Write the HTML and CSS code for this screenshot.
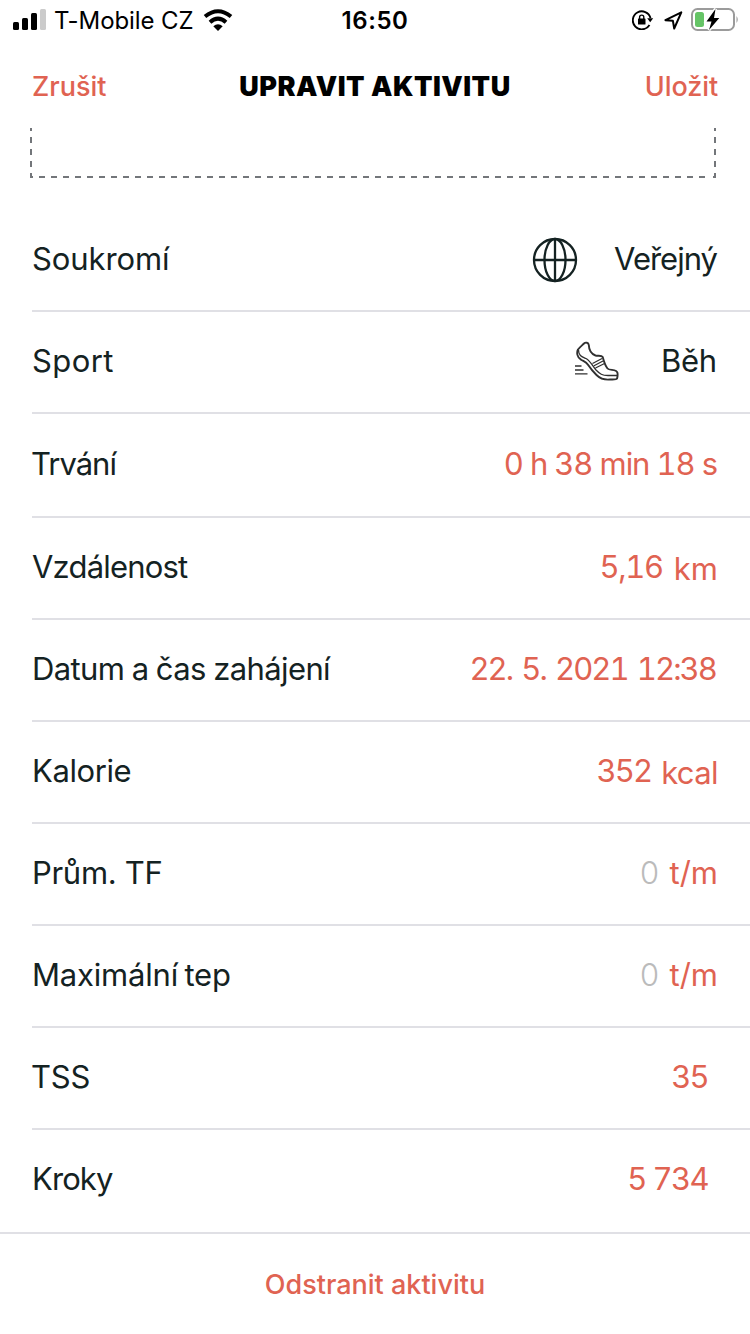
FILE: index.html
```html
<!DOCTYPE html>
<html lang="cs">
<head>
    <meta charset="UTF-8">
    <meta name="viewport" content="width=device-width, initial-scale=1.0">
    <title>Upravit aktivitu</title>
    <link rel="stylesheet" href="styles.css">
</head>
<body>
    <div class="status-bar">
        <div class="status-left">
            <svg class="signal" width="33" height="21" viewBox="0 0 33 21">
                <rect x="0" y="13" width="6" height="8" rx="1.5"/>
                <rect x="9" y="9" width="6" height="12" rx="1.5"/>
                <rect x="18" y="4" width="6" height="17" rx="1.5"/>
                <rect class="signal-off" x="27" y="0" width="6" height="21" rx="1.5"/>
            </svg>
            <span class="carrier">T-Mobile CZ</span>
            <svg class="wifi" width="30" height="22" viewBox="0 0 30 22">
                <path d="M2 7.5Q15-3 28 7.5M7 13.2Q15 6.2 23 13.2" fill="none" stroke="#000" stroke-width="4"/>
                <path d="M10.3 17.3Q15 13.3 19.7 17.3L15 22Z"/>
            </svg>
        </div>
        <div class="clock">16:50</div>
        <div class="status-right">
            <svg class="rotation" width="22" height="20" viewBox="0 0 22 20">
                <path d="M17.5 15A9 9 0 1 1 18.5 8" fill="none" stroke="#000" stroke-width="1.9"/>
                <path d="M15.2 8.2H21.2L18.2 12.2Z"/>
                <rect x="6" y="8.5" width="7.5" height="6" rx=".6"/>
                <path d="M7.6 9V7.2a2.1 2.1 0 0 1 4.2 0V9" fill="none" stroke="#000" stroke-width="1.4"/>
            </svg>
            <svg class="location" width="19" height="19" viewBox="0 0 19 19">
                <path d="M1.4 9.2L17.3 1.4L10.2 17.5L8.9 9.8Z" fill="none" stroke="#000" stroke-width="2" stroke-linejoin="round"/>
            </svg>
            <svg class="battery" width="48" height="24" viewBox="0 0 48 24">
                <rect x="1" y="1" width="42" height="21" rx="5.5" fill="none" stroke="#9b9b9b" stroke-width="2"/>
                <path d="M45.5 8Q48 11.5 45.5 15Z" fill="#9b9b9b"/>
                <rect x="4" y="4" width="9" height="15" rx="2.5" fill="#65c466"/>
                <path d="M24.5 1L15.5 13.5H20.5L18 22L28.3 10H23Z" stroke="#fff" stroke-width="3"/>
                <path d="M24.5 1L15.5 13.5H20.5L18 22L28.3 10H23Z"/>
            </svg>
        </div>
    </div>

    <div class="header">
        <a class="header-btn">Zrušit</a>
        <h1>UPRAVIT AKTIVITU</h1>
        <a class="header-btn save">Uložit</a>
    </div>

    <!-- Bottom part of the photo box, the rest is scrolled away -->
    <svg class="photo-box" width="686" height="50" viewBox="0 0 686 50">
        <path d="M1 0V3M1 9V15M1 21V27M1 33V39M1 45V50M685 0V3M685 9V15M685 21V27M685 33V39M685 45V50M0 49H3M683 49H686"/>
        <path d="M9 49H680" stroke-dasharray="6 6"/>
    </svg>

    <div class="list">
        <div class="row">
            <span class="label soukromi">Soukromí</span>
            <span class="value dark">
                <svg class="globe" width="46" height="46" viewBox="0 0 46 46">
                    <circle cx="23" cy="23" r="21"/>
                    <ellipse cx="23" cy="23" rx="10.5" ry="21"/>
                    <path d="M23 2V44M2 23H44"/>
                </svg>
                <span class="verejny">Veřejný</span>
            </span>
        </div>
        <div class="row">
            <span class="label sport">Sport</span>
            <span class="value dark">
                <svg class="shoe" width="44" height="40" viewBox="0 0 44 40">
                    <path d="M3 8.5C5 6 7 4.5 9 2.5C10.5 1 13.5 1.5 13.8 4C14 9 16.5 13 20.5 14.5C23 15.3 26.5 14 27.7 16C28.8 20 30 24.5 32.5 27.5C34.5 30 41.8 27.5 42.5 32C42.8 34.5 42.6 36 42 37.7C41.5 38.8 38 38.5 35 38.5C28 39 25 37.5 21.5 34C18.5 31 15.5 27.5 13.2 24C11 20.5 9 20.5 6 18.7C2 16.5 1.5 11.5 3 8.5Z"/>
                    <path class="thin" d="M3.5 9C3.5 15.5 8 16 11 17.5C15.5 20 17.5 25 21 29C25 33 27 34.5 33 34.5H42M17.5 22.5L27 17.5M19 24.8L28 20M20.5 27L29.5 22.5"/>
                    <path class="thin" d="M0 25H6.5M0 29H8.5M0 32.8H12.5"/>
                </svg>
                <span class="beh">Běh</span>
            </span>
        </div>
        <div class="row tall">
            <span class="label trvani">Trvání</span>
            <span class="value duration">0 h 38 min 18 s</span>
        </div>
        <div class="row">
            <span class="label vzdalenost">Vzdálenost</span>
            <span class="value"><span class="number distance">5,16</span><span class="unit km">km</span></span>
        </div>
        <div class="row">
            <span class="label datum">Datum a čas zahájení</span>
            <span class="value date">22. 5. 2021 12:38</span>
        </div>
        <div class="row">
            <span class="label kalorie">Kalorie</span>
            <span class="value"><span class="number">352</span><span class="unit kcal">kcal</span></span>
        </div>
        <div class="row">
            <span class="label prum">Prům. TF</span>
            <span class="value"><span class="empty">0</span><span class="tm">t/m</span></span>
        </div>
        <div class="row">
            <span class="label tep">Maximální tep</span>
            <span class="value"><span class="empty">0</span><span class="tm">t/m</span></span>
        </div>
        <div class="row">
            <span class="label tss">TSS</span>
            <span class="value inset">35</span>
        </div>
        <div class="row last">
            <span class="label kroky">Kroky</span>
            <span class="value inset steps">5 734</span>
        </div>
    </div>

    <div class="footer">
        <a class="delete-btn">Odstranit aktivitu</a>
    </div>
</body>
</html>
```
FILE: styles.css
```css
* {
    box-sizing: border-box;
}
body {
    font-family: Inter, 'Liberation Sans', sans-serif;
    margin: 0;
    width: 750px;
    height: 1334px;
    overflow: hidden;
    background-color: #fff;
    color: #142222;
}
svg {
    display: block;
    flex: none;
}
.status-bar {
    display: grid;
    grid-template-columns: 1fr auto 1fr;
    align-items: center;
    height: 40px;
    padding: 0 11px 0 13px;
    color: #000;
}
.status-left,
.status-right {
    display: flex;
    align-items: center;
}
.status-left svg {
    margin-top: -1px;
}
.status-right {
    justify-content: flex-end;
}
.signal-off {
    fill: #cbcbcb;
}
.carrier {
    margin: 1px 10px 0 8px;
    font-size: 24px;
    letter-spacing: -0.1px;
    white-space: nowrap;
}
.clock {
    padding: 1px 2px 0 0;
    font-size: 24px;
    font-weight: 600;
    letter-spacing: 0.6px;
}
.location {
    margin: 0 8px 0 10px;
}
.header {
    display: grid;
    grid-template-columns: 1fr auto 1fr;
    align-items: center;
    height: 88px;
    padding: 0 32px 0 32px;
}
.header h1 {
    margin: 4px 0 0;
    font-size: 27px;
    font-weight: 900;
    letter-spacing: 0.5px;
    color: #000;
}
.header-btn {
    margin-top: 4px;
    font-size: 27px;
    font-weight: 500;
    color: #e06352;
}
.save {
    text-align: right;
    letter-spacing: -0.1px;
}
.photo-box {
    margin: 0 0 32px 30px;
    fill: none;
    stroke: #73767a;
    stroke-width: 2;
}
.list {
    padding-left: 32px;
}
.row {
    display: flex;
    justify-content: space-between;
    align-items: center;
    height: 102px;
    padding: 0 32px 2px 0;
    border-bottom: 2px solid #e0e0e5;
    font-size: 31px;
    line-height: 40px;
    white-space: nowrap;
}
.tall {
    height: 104px;
}
.last {
    padding-bottom: 4px;
    border-bottom: none;
}
.value {
    display: flex;
    align-items: center;
    color: #e06352;
    white-space: pre;
    font-variant-numeric: tabular-nums;
}
.dark {
    color: #142222;
}
.inset {
    padding-right: 10px;
    letter-spacing: -1.7px;
}
.globe {
    margin: 2px 37px 0 0;
    fill: none;
    stroke: #142222;
    stroke-width: 2.3;
}
.shoe {
    margin-right: 42px;
    fill: none;
    stroke: #303030;
    stroke-width: 1.9;
    stroke-linejoin: round;
}
.thin {
    stroke-width: 1.3;
}
.number {
    margin: -1px 10px 0 0;
    letter-spacing: -1.9px;
}
.distance {
    margin-right: 11px;
    letter-spacing: -1.3px;
}
.unit {
    padding-top: 4px;
}
.empty {
    margin-right: 10px;
    font-weight: 300;
    color: #bbb;
}

/* letter fit of the single texts */
.soukromi {
    letter-spacing: -0.1px;
}
.sport {
    letter-spacing: 0.4px;
}
.trvani {
    margin-left: -1px;
    letter-spacing: -1px;
}
.vzdalenost {
    letter-spacing: -0.8px;
}
.datum {
    letter-spacing: -0.6px;
    word-spacing: -0.8px;
}
.kalorie {
    letter-spacing: -0.4px;
}
.prum {
    letter-spacing: -0.3px;
}
.tep {
    letter-spacing: -0.2px;
    word-spacing: -2px;
}
.tss {
    margin-left: -1px;
    letter-spacing: -0.2px;
}
.kroky {
    letter-spacing: -0.9px;
}
.verejny {
    padding-right: 1px;
    margin-left: -1px;
    letter-spacing: -1px;
}
.beh {
    padding-right: 1px;
    letter-spacing: -0.2px;
}
.duration {
    padding-right: 1px;
    letter-spacing: -1.1px;
    word-spacing: 0;
}
.date {
    padding-right: 2px;
    letter-spacing: -1.9px;
    word-spacing: 2.6px;
}
.kcal {
    letter-spacing: -0.6px;
}
.steps {
    letter-spacing: -1.6px;
}
.footer {
    height: 102px;
    padding-top: 34px;
    border-top: 2px solid #e0e0e5;
    text-align: center;
}
.delete-btn {
    font-size: 27px;
    font-weight: 500;
    line-height: 34px;
    color: #e06352;
}
```
